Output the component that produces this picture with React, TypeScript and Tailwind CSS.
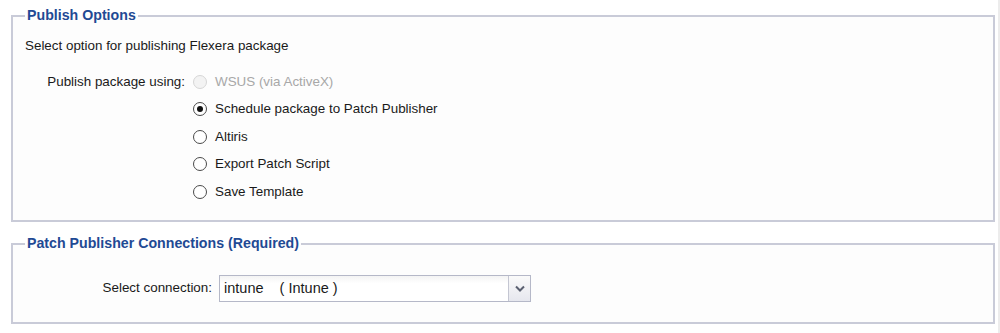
import React from "react";

function Radio({ checked, disabled }: { checked?: boolean; disabled?: boolean }) {
  return (
    <span
      className={
        "relative inline-block w-[14px] h-[14px] rounded-full border shrink-0 " +
        (disabled ? "border-[#d6d6d6] bg-[#f3f3f3]" : "border-[#4a4a4a] bg-white")
      }
    >
      {checked && (
        <span className="absolute left-[3px] top-[3px] w-[6px] h-[6px] rounded-full bg-[#111111]" />
      )}
    </span>
  );
}

function RadioRow({ label, checked, disabled }: { label: string; checked?: boolean; disabled?: boolean }) {
  return (
    <div className="flex items-center h-[27.5px] gap-[8px]">
      <Radio checked={checked} disabled={disabled} />
      <span className={disabled ? "text-[#a8a8a8]" : "text-[#1a1a1a]"}>{label}</span>
    </div>
  );
}

export default function App() {
  return (
    <div
      className="w-[1000px] h-[333px] bg-white flex text-[13.4px] text-[#1a1a1a] overflow-hidden"
      style={{ fontFamily: '"Liberation Sans", Arial, sans-serif' }}
    >
      <div className="w-[998px] pl-[11px] pr-[3px] pt-[8px] flex flex-col gap-[14px]">
        <fieldset className="border-2 border-[#c9cbd8] bg-[#fdfdfd] h-[214px] px-[12px] pt-[8px]">
          <legend className="ml-0 px-[2px] text-[14.2px] font-bold text-[#1f4a94] leading-[15px]">
            Publish Options
          </legend>
          <div className="pt-[7px] leading-[15px]">Select option for publishing Flexera package</div>
          <div className="flex mt-[15px]">
            <div className="w-[168px] text-right pr-[8px] h-[27.5px] flex items-center justify-end">
              Publish package using:
            </div>
            <div className="flex flex-col">
              <RadioRow label="WSUS (via ActiveX)" disabled />
              <RadioRow label="Schedule package to Patch Publisher" checked />
              <RadioRow label="Altiris" />
              <RadioRow label="Export Patch Script" />
              <RadioRow label="Save Template" />
            </div>
          </div>
        </fieldset>
        <fieldset className="border-2 border-[#c9cbd8] bg-[#fdfdfd] h-[88px] px-[12px]">
          <legend className="ml-0 px-[2px] text-[14.2px] font-bold text-[#1f4a94] leading-[15px]">
            Patch Publisher Connections (Required)
          </legend>
          <div className="flex items-center mt-[24px]">
            <div className="w-[194px] text-right pr-[7px]">Select connection:</div>
            <div className="flex w-[312px] h-[27px] border border-[#b5b8c8] bg-white">
              <div className="flex-1 flex items-center pl-[4px] text-[14.5px] bg-gradient-to-b from-[#f4f4f4] to-white to-[30%]">
                intune&nbsp;&nbsp;&nbsp;&nbsp;( Intune )
              </div>
              <div className="w-[22px] border-l border-[#c4c6d2] bg-gradient-to-b from-[#fafafa] to-[#e6e7ee] flex items-center justify-center">
                <svg width="10" height="7" viewBox="0 0 10 7">
                  <path d="M1 1.5 L5 5.5 L9 1.5" fill="none" stroke="#5a6070" strokeWidth="2" />
                </svg>
              </div>
            </div>
          </div>
        </fieldset>
      </div>
      <div className="w-[2px] bg-[#ececec]" />
    </div>
  );
}
